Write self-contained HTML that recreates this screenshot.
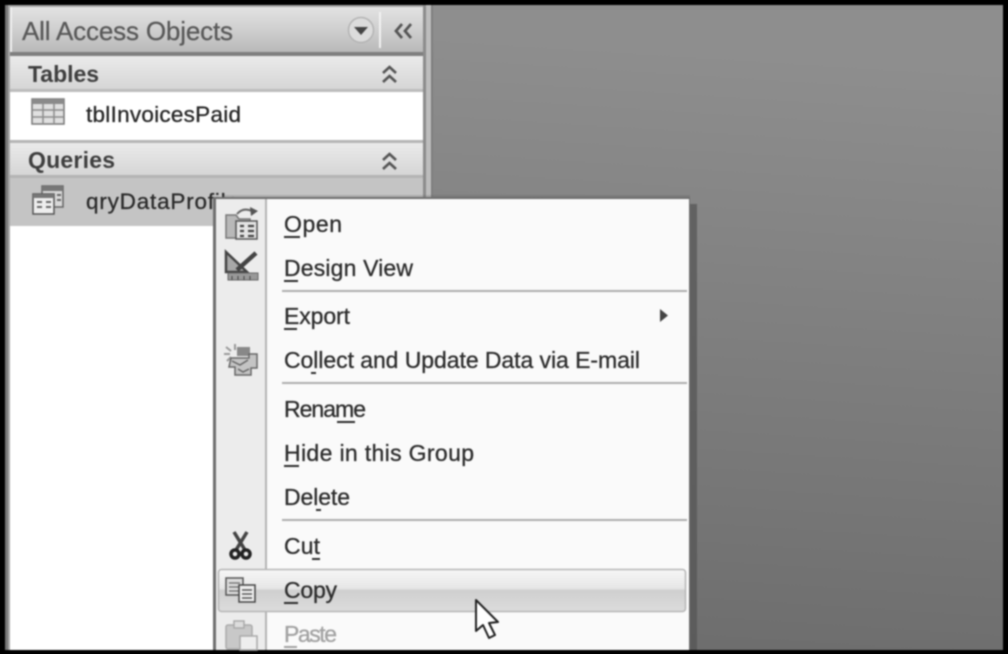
<!DOCTYPE html>
<html><head><meta charset="utf-8"><style>
html,body{margin:0;padding:0;background:#000;width:1008px;height:654px;overflow:hidden}
svg{display:block;filter:blur(.7px)}
text{font-family:"Liberation Sans",sans-serif}
</style></head><body>
<svg width="1008" height="654" viewBox="0 0 1008 654" xmlns="http://www.w3.org/2000/svg">
<defs>
<linearGradient id="bg" x1="0.1" y1="0" x2="0" y2="1"><stop offset="0" stop-color="#8e8e8e"/><stop offset="1" stop-color="#6b6b6b"/></linearGradient>
<linearGradient id="hd" x1="0" y1="0" x2="0" y2="1"><stop offset="0" stop-color="#e2e2e2"/><stop offset=".5" stop-color="#cfcfcf"/><stop offset="1" stop-color="#b8b8b8"/></linearGradient>
<linearGradient id="gh" x1="0" y1="0" x2="0" y2="1"><stop offset="0" stop-color="#eaeaea"/><stop offset="1" stop-color="#d4d4d4"/></linearGradient>
<linearGradient id="cp" x1="0" y1="0" x2="0" y2="1"><stop offset="0" stop-color="#f6f6f6"/><stop offset=".45" stop-color="#e6e6e6"/><stop offset=".5" stop-color="#cfcfcf"/><stop offset="1" stop-color="#dcdcdc"/></linearGradient>
</defs>
<rect width="1008" height="654" fill="#000"/>
<rect x="5" y="5" width="998" height="645" fill="url(#bg)"/>
<!-- pane -->
<rect x="5" y="5" width="428" height="645" fill="#a6a6a6"/>
<rect x="5" y="5" width="3" height="645" fill="#777"/>
<rect x="423" y="5" width="3" height="645" fill="#8c8c8c"/>
<rect x="426" y="5" width="5" height="645" fill="#bdbdbd"/>
<rect x="431" y="5" width="2" height="645" fill="#7e7e7e"/>
<rect x="10" y="7" width="413" height="643" fill="#fff"/>
<rect x="10" y="7" width="413" height="45" fill="url(#hd)"/>
<rect x="10" y="7" width="2" height="45" fill="#f0f0f0"/>
<rect x="10" y="52" width="413" height="4" fill="#7f7f7f"/>
<text x="22" y="40" font-size="26" fill="#585858" stroke="#585858" stroke-width=".25" textLength="211" lengthAdjust="spacing">All Access Objects</text>
<circle cx="361" cy="30" r="12.5" fill="#dcdcdc" stroke="#b4b4b4" stroke-width="1.500"/>
<path d="M354 27H368L361 35Z" fill="#444"/>
<rect x="379" y="12" width="2" height="36" fill="#f2f2f2"/>
<path d="M402 24L396 31L402 38M411 24L405 31L411 38" fill="none" stroke="#555" stroke-width="2.800"/>
<!-- tables -->
<rect x="10" y="56" width="413" height="35" fill="url(#gh)"/>
<rect x="10" y="89" width="413" height="3" fill="#bcbcbc"/>
<text x="28" y="82" font-size="23" font-weight="bold" fill="#3e3e3e" textLength="71" lengthAdjust="spacing">Tables</text>
<path d="M383 73L389.500 67L396 73M383 82L389.500 76L396 82" fill="none" stroke="#555" stroke-width="2.600"/>
<rect x="10" y="92" width="413" height="48" fill="#fff"/>
<rect x="32" y="99" width="32" height="25" fill="#e0e0e0" stroke="#777" stroke-width="1.500"/>
<rect x="32" y="99" width="32" height="5" fill="#8a8a8a"/>
<path d="M32 110H64M32 117H64M43 104V124M54 104V124" stroke="#8c8c8c" stroke-width="1.500"/>
<text x="86" y="122" font-size="22.500" fill="#262626" stroke="#262626" stroke-width=".3" textLength="155" lengthAdjust="spacing">tblInvoicesPaid</text>
<!-- queries -->
<rect x="10" y="140" width="413" height="3" fill="#b5b5b5"/>
<rect x="10" y="143" width="413" height="34" fill="url(#gh)"/>
<rect x="10" y="175" width="413" height="3" fill="#b4b4b4"/>
<text x="28" y="168" font-size="23" font-weight="bold" fill="#3e3e3e" textLength="87" lengthAdjust="spacing">Queries</text>
<path d="M383 160L389.500 154L396 160M383 169L389.500 163L396 169" fill="none" stroke="#555" stroke-width="2.600"/>
<rect x="10" y="178" width="413" height="48" fill="#c4c4c4"/>
<rect x="42" y="186" width="21" height="21" fill="#d8d8d8" stroke="#666" stroke-width="1.500"/>
<rect x="42" y="186" width="21" height="5" fill="#777"/>
<rect x="33" y="194" width="21" height="20" fill="#eee" stroke="#555" stroke-width="1.500"/>
<rect x="33" y="194" width="21" height="4" fill="#777"/>
<path d="M37 202H42M37 207H42M46 202H51M46 207H51M57 195H61M57 200H61" stroke="#666" stroke-width="2"/>
<text x="86" y="209" font-size="22.500" fill="#2a2a2a" stroke="#2a2a2a" stroke-width=".3" textLength="153" lengthAdjust="spacing">qryDataProfile</text>
<!-- menu shadow -->
<rect x="689" y="204" width="8" height="446" fill="#555" opacity=".75"/>
<rect x="222" y="195" width="468" height="3" fill="#555" opacity=".2"/>
<!-- menu -->
<rect x="213" y="197" width="477" height="453" fill="#6f6f6f"/>
<rect x="216" y="199" width="473" height="451" fill="#fafafa"/>
<rect x="216" y="199" width="50" height="451" fill="#ececec"/>
<rect x="265" y="199" width="2" height="451" fill="#b4b4b4"/>
<g fill="#aeaeae">
<rect x="282" y="290" width="405" height="2"/>
<rect x="282" y="382" width="405" height="2"/>
<rect x="282" y="519" width="405" height="2"/>
</g>
<rect x="218.500" y="569.500" width="467" height="42" rx="3" fill="url(#cp)" stroke="#b6b6b6" stroke-width="1.500"/>
<!-- menu text -->
<g font-size="23" fill="#2c2c2c" stroke="#2c2c2c" stroke-width=".3">
<text x="284" y="232" textLength="58" lengthAdjust="spacing">Open</text>
<text x="284" y="276" textLength="129" lengthAdjust="spacing">Design View</text>
<text x="284" y="324" textLength="66" lengthAdjust="spacing">Export</text>
<text x="284" y="368" textLength="356" lengthAdjust="spacing">Collect and Update Data via E-mail</text>
<text x="284" y="417" textLength="82" lengthAdjust="spacing">Rename</text>
<text x="284" y="461" textLength="190" lengthAdjust="spacing">Hide in this Group</text>
<text x="284" y="505" textLength="66" lengthAdjust="spacing">Delete</text>
<text x="284" y="554" textLength="36" lengthAdjust="spacing">Cut</text>
<text x="284" y="598" textLength="53" lengthAdjust="spacing">Copy</text>
<text x="284" y="642" textLength="53" fill="#a2a2a2" stroke="#a2a2a2" lengthAdjust="spacing">Paste</text>
</g>
<g fill="#2c2c2c">
<rect x="284" y="236" width="16" height="2"/>
<rect x="284" y="280" width="14" height="2"/>
<rect x="284" y="328" width="13" height="2"/>
<rect x="311" y="372" width="5" height="2"/>
<rect x="337" y="421" width="18" height="2"/>
<rect x="284" y="465" width="15" height="2"/>
<rect x="316" y="509" width="5" height="2"/>
<rect x="312" y="558" width="8" height="2"/>
<rect x="284" y="602" width="14" height="2"/>
<rect x="284" y="646" width="13" height="2" fill="#a2a2a2"/>
</g>
<path d="M660 309L668 315.500L660 322Z" fill="#444"/>
<!-- open icon -->
<path d="M226 215H236L239 219H250V238H226Z" fill="#b8b8b8" stroke="#777" stroke-width="1.500"/>
<path d="M237 214Q243 207 252 211" fill="none" stroke="#666" stroke-width="2"/>
<path d="M250 207L258 211L251 216Z" fill="#555"/>
<rect x="236" y="221" width="21" height="18" fill="#e4e4e4" stroke="#555" stroke-width="1.500"/>
<path d="M240 226H244M240 231H244M240 236H244M248 226H254M248 231H254M248 236H254" stroke="#444" stroke-width="2.200"/>
<!-- design icon -->
<path d="M226 252L226 272L247 272Z" fill="#a8a8a8" stroke="#444" stroke-width="2.500"/>
<path d="M237 270L256 253" stroke="#444" stroke-width="4.500"/>
<rect x="228" y="273" width="30" height="7" fill="#999" stroke="#666"/>
<path d="M232 276V280M238 276V280M244 276V280M250 276V280" stroke="#444"/>
<!-- collect icon -->
<path d="M226 347L231 351M235 344V350M224 354H230M227 361L231 357" stroke="#999" stroke-width="2"/>
<rect x="237" y="347" width="13" height="9" fill="#888"/>
<path d="M231 358H249V354H257V368H251V375H235V367H229Z" fill="#c4c4c4" stroke="#666" stroke-width="1.500"/>
<path d="M238 369L243 372L249 369M232 361L240 365L248 360" fill="none" stroke="#666" stroke-width="1.500"/>
<!-- scissors -->
<path d="M234 532L245 550M247 532L236 550" stroke="#444" stroke-width="3.500"/>
<circle cx="235" cy="554" r="4" fill="none" stroke="#222" stroke-width="3.500"/>
<circle cx="246" cy="554" r="4" fill="none" stroke="#222" stroke-width="3.500"/>
<!-- copy -->
<rect x="226" y="578" width="17" height="17" fill="#ddd" stroke="#555" stroke-width="1.500"/>
<path d="M229 583H240M229 587H240M229 591H240" stroke="#777" stroke-width="1.500"/>
<rect x="239" y="585" width="16" height="17" fill="#eee" stroke="#444" stroke-width="1.500"/>
<path d="M242 590H252M242 594H252M242 598H252" stroke="#555" stroke-width="1.500"/>
<!-- paste -->
<rect x="226" y="625" width="26" height="24" rx="2" fill="#c8c8c8" stroke="#aaa" stroke-width="1.500"/>
<rect x="234" y="621" width="10" height="7" fill="#ddd" stroke="#aaa" stroke-width="1.500"/>
<rect x="240" y="636" width="17" height="14" fill="#eee" stroke="#aaa" stroke-width="1.500"/>
<!-- cursor -->
<path d="M476 600V631L483 625L489 638L495 635L489 623L498 622Z" fill="#fff" stroke="#222" stroke-width="2" stroke-linejoin="round"/>
</svg>
</body></html>
